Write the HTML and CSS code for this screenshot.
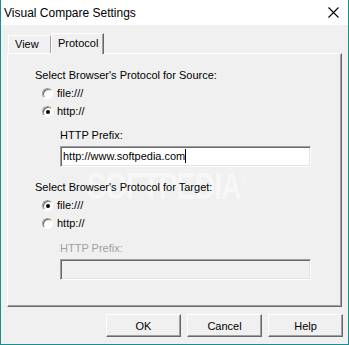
FILE: index.html
```html
<!DOCTYPE html>
<html lang="en">
<head>
    <meta charset="UTF-8">
    <title>Visual Compare Settings</title>
    <link rel="stylesheet" href="styles.css">
</head>
<body>
    <div class="window">
        <div class="titlebar">
            <span class="title">Visual Compare Settings</span>
            <svg class="close" width="11" height="11" viewBox="0 0 11 11">
                <path d="M0.5 0.5 L10.5 10.5 M10.5 0.5 L0.5 10.5" stroke="#000" stroke-width="1.1" fill="none"/>
            </svg>
        </div>

        <div class="client">
            <div class="tabs">
                <div class="tab">View</div>
                <div class="tab active">Protocol</div>
            </div>

            <div class="panel">
                <div class="watermark">SOFTPEDIA<sup>&reg;</sup></div>

                <div class="group-label">Select Browser's Protocol for Source:</div>
                <label class="radio-row"><span class="radio"></span>file:///</label>
                <label class="radio-row"><span class="radio checked"></span>http://</label>
                <div class="prefix-label">HTTP Prefix:</div>
                <div class="edit">http://www.softpedia.com<span class="caret"></span></div>

                <div class="group-label second">Select Browser's Protocol for Target:</div>
                <label class="radio-row"><span class="radio checked"></span>file:///</label>
                <label class="radio-row"><span class="radio"></span>http://</label>
                <div class="prefix-label disabled">HTTP Prefix:</div>
                <div class="edit disabled"></div>
            </div>

            <div class="buttons">
                <button>OK</button>
                <button>Cancel</button>
                <button>Help</button>
            </div>
        </div>
    </div>
</body>
</html>
```

FILE: styles.css
```css
body {
    margin: 0;
    font-family: "Liberation Sans", Arial, sans-serif;
    font-size: 11px;
    color: #000;
}

.window {
    width: 349px;
    height: 345px;
    box-sizing: border-box;
    border: 1px solid #1b8d8d;
    border-top: none;
    background: #f0f0f0;
    display: flex;
    flex-direction: column;
}

.titlebar {
    height: 25px;
    background: #fff;
    display: flex;
    align-items: center;
    justify-content: space-between;
    padding: 0 9px 0 3px;
}

.title {
    font-family: "Liberation Sans", Arial, sans-serif;
    font-size: 12px;
}

.client {
    padding: 7px 6px 0 6px;
}

.tabs {
    display: flex;
    align-items: flex-end;
    height: 21px;
    padding-left: 1px;
}

.tab {
    height: 17px;
    line-height: 17px;
    padding: 0 6px;
    border: 1px solid #fff;
    border-bottom: none;
    border-right-color: #a0a0a0;
    width: 29px;
}

.tab.active {
    height: 20px;
    line-height: 18px;
    width: 39px;
    border-right: 1px solid #696969;
    box-shadow: inset -1px 0 0 #a0a0a0;
    position: relative;
    margin-bottom: -1px;
    background: #f0f0f0;
    z-index: 1;
}

.panel {
    position: relative;
    isolation: isolate;
    height: 254px;
    border: 1px solid #fff;
    border-right-color: #696969;
    border-bottom-color: #696969;
    box-shadow: inset -1px -1px 0 #a0a0a0;
    padding: 14px 0 0 27px;
    box-sizing: border-box;
    overflow: hidden;
}

.group-label {
    line-height: 14px;
    margin-bottom: 2px;
}

.group-label.second {
    margin-top: 13px;
}

.radio-row {
    display: flex;
    align-items: center;
    height: 18px;
    padding-left: 7px;
}

.radio {
    width: 11px;
    height: 11px;
    border-radius: 50%;
    border: 1px solid;
    border-color: #a0a0a0 #fff #fff #a0a0a0;
    box-shadow: inset 1px 1px 0 #696969;
    background: #fff;
    margin-right: 4px;
    position: relative;
    box-sizing: border-box;
    flex: none;
}

.radio.checked::after {
    content: "";
    position: absolute;
    left: 3px;
    top: 3px;
    width: 4px;
    height: 4px;
    border-radius: 50%;
    background: #000;
}

.prefix-label {
    line-height: 14px;
    margin: 8px 0 0 25px;
}

.prefix-label.disabled {
    color: #a0a0a0;
    margin-top: 9px;
}

.edit {
    width: 251px;
    height: 21px;
    box-sizing: border-box;
    margin: 4px 0 0 25px;
    border: 1px solid;
    border-color: #a0a0a0 #fff #fff #a0a0a0;
    box-shadow: inset 1px 1px 0 #696969, inset -1px -1px 0 #e3e3e3;
    background: #fff;
    padding: 0 2px;
    line-height: 19px;
    white-space: nowrap;
}

.edit.disabled {
    background: #f0f0f0;
}

.caret {
    display: inline-block;
    width: 1px;
    height: 14px;
    background: #000;
    vertical-align: -3px;
}

/* faint site watermark, painted under the controls */
.watermark {
    position: absolute;
    z-index: -1;
    left: 79px;
    top: 112px;
    font-family: "Liberation Sans", sans-serif;
    font-weight: bold;
    font-size: 36px;
    letter-spacing: -1px;
    color: #f7f7f7;
    transform: scaleX(0.78);
    transform-origin: left top;
    white-space: nowrap;
}

.watermark sup {
    font-size: 12px;
    font-weight: normal;
}

.buttons {
    display: flex;
    justify-content: flex-end;
    gap: 6px;
    margin-top: 7px;
    margin-right: -1px;
}

button {
    width: 75px;
    height: 23px;
    font-family: "Liberation Sans", Arial, sans-serif;
    font-size: 11px;
    color: #000;
    background: #f0f0f0;
    border: 1px solid;
    border-color: #fff #696969 #696969 #fff;
    box-shadow: inset -1px -1px 0 #a0a0a0;
    padding: 0;
}
```
